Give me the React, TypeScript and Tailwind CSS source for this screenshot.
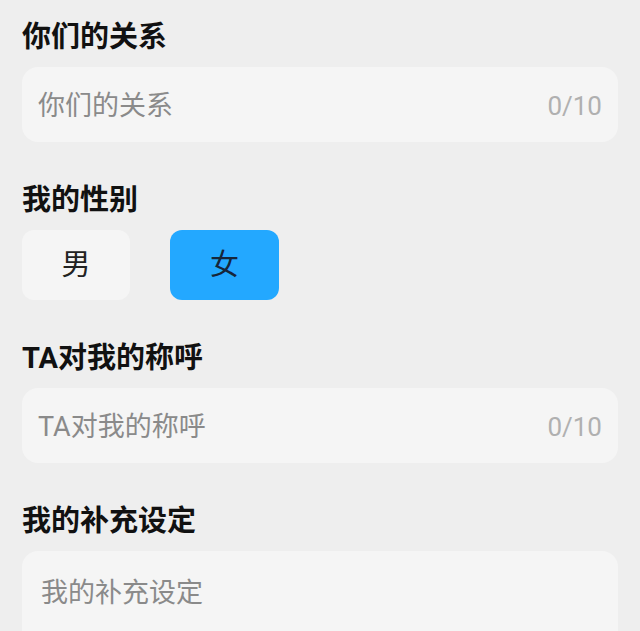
import React from "react";

const font = { fontFamily: 'Roboto, "Noto Sans CJK SC", "Noto Sans", sans-serif' };

function Heading({ children }: { children: React.ReactNode }) {
  return (
    <div className="text-[29px] leading-[40px] font-bold text-[#111111] mb-[10px]">{children}</div>
  );
}

function InputRow({ placeholder }: { placeholder: string }) {
  return (
    <div className="h-[75px] rounded-[16px] bg-[#f5f5f5] flex items-center justify-between pl-4 pr-4 pt-[3px]">
      <span className="text-[27px] text-[#8a8a8a]">{placeholder}</span>
      <span className="text-[26px] text-[#b0b0b0]">0/10</span>
    </div>
  );
}

export default function App() {
  return (
    <div className="w-[640px] h-[631px] overflow-hidden bg-[#eeeeee] px-[22px] pt-[17px]" style={font}>
      <Heading>你们的关系</Heading>
      <InputRow placeholder="你们的关系" />

      <div className="mt-[38px]">
        <Heading>我的性别</Heading>
        <div className="flex gap-10">
          <div className="w-[108px] h-[70px] rounded-[12px] bg-[#f5f5f5] flex items-center justify-center pt-[2px] text-[29px] text-[#222222]">男</div>
          <div className="w-[109px] h-[70px] rounded-[12px] bg-[#23a8ff] flex items-center justify-center pt-[2px] text-[29px] text-[#16263a]">女</div>
        </div>
      </div>

      <div className="mt-[38px]">
        <Heading>TA对我的称呼</Heading>
        <InputRow placeholder="TA对我的称呼" />
      </div>

      <div className="mt-[38px]">
        <Heading>我的补充设定</Heading>
        <div className="h-[160px] rounded-[16px] bg-[#f5f5f5] pl-[19px] pt-[22px]">
          <span className="text-[27px] leading-[40px] text-[#8a8a8a]">我的补充设定</span>
        </div>
      </div>
    </div>
  );
}
